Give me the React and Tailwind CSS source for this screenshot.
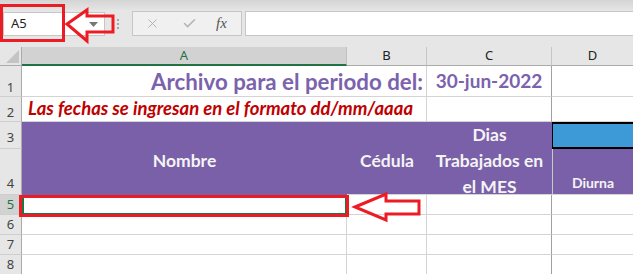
import { X, Check } from 'lucide-react';

export default function App() {
  return (
    <div className="relative w-[633px] h-[274px] overflow-hidden bg-white font-['Lato',sans-serif]">
      {/* toolbar */}
      <div className="flex items-start h-[47px] pt-[11px] bg-[linear-gradient(to_bottom,#d4d4d4,#e6e6e6_11px)]">
        <div className="ml-[3px] mt-[1px] w-[102px] h-[24px] bg-white border border-[#c6c6c6] flex items-center justify-between pl-[7px] pr-[6px]">
          <span className="text-[13px] text-[#222] font-['Noto_Sans',sans-serif]">A5</span>
          <svg width="9" height="5" viewBox="0 0 9 5"><polygon points="0,0 9,0 4.5,5" fill="#777" /></svg>
        </div>
        <div className="ml-[12px] mt-[8px] flex flex-col gap-[2px]">
          <div className="w-[2px] h-[2px] bg-[#a8a8a8]" />
          <div className="w-[2px] h-[2px] bg-[#a8a8a8]" />
          <div className="w-[2px] h-[2px] bg-[#a8a8a8]" />
        </div>
        <div className="ml-[13px] w-[110px] h-[25px] border border-[#c6c6c6] bg-[#f0f0f0] flex items-center">
          <X className="ml-[12px]" size={15} color="#b4b4b4" strokeWidth={1.6} />
          <Check className="ml-[22px]" size={15} color="#b4b4b4" strokeWidth={2.4} />
          <span className="ml-[19px] text-[15px] italic text-[#555] font-['Liberation_Serif',serif] leading-none">fx</span>
        </div>
        <div className="ml-[3px] flex-1 h-[25px] bg-white border-y border-l border-[#c6c6c6]" />
      </div>

      {/* sheet */}
      <div className="grid grid-cols-[22px_325px_80px_125px_81px] grid-rows-[19px_31px_25px_27px_46px_20px_20px_20px_20px]">
        {/* column headers */}
        <div className="relative bg-[#e6e6e6] border-r border-b border-[#ababab]">
          <svg className="absolute right-[2px] bottom-[2px]" width="13" height="13" viewBox="0 0 13 13"><polygon points="13,0 13,13 0,13" fill="#c4c4c4" /></svg>
        </div>
        <div className="bg-[#d2d2d2] border-r border-[#c0c0c0] border-b-2 border-b-[#217346] flex items-center justify-center text-[13px] text-[#217346] font-['Noto_Sans',sans-serif]">A</div>
        <div className="bg-[#e6e6e6] border-r border-b border-[#ababab] border-r-[#c6c6c6] flex items-center justify-center text-[13px] text-[#222] font-['Noto_Sans',sans-serif]">B</div>
        <div className="bg-[#e6e6e6] border-r border-b border-[#ababab] border-r-[#c6c6c6] flex items-center justify-center text-[13px] text-[#222] font-['Noto_Sans',sans-serif]">C</div>
        <div className="bg-[#e6e6e6] border-b border-[#ababab] flex items-center justify-center text-[13px] text-[#222] font-['Noto_Sans',sans-serif]">D</div>

        {/* row 1 */}
        <div className="bg-[#e6e6e6] border-r border-b border-[#ababab] border-b-[#cfcfcf] flex items-end justify-center pb-[2px] text-[13px] text-[#444] leading-none font-['Noto_Sans',sans-serif]">1</div>
        <div className="col-span-2 border-r border-b border-[#d4d4d4] flex items-center justify-end pr-[3px] pt-[1px] text-[22.3px] font-bold text-[#7b62ad] whitespace-nowrap">Archivo para el periodo del:</div>
        <div className="border-r border-b border-[#d4d4d4] border-r-[#a0a0a0] flex items-center justify-center pt-[1px] text-[19px] font-bold text-[#7b62ad] whitespace-nowrap">30-jun-2022</div>
        <div className="border-b border-[#d4d4d4]" />

        {/* row 2 */}
        <div className="bg-[#e6e6e6] border-r border-b border-[#ababab] border-b-[#cfcfcf] flex items-end justify-center pb-[2px] text-[13px] text-[#444] leading-none font-['Noto_Sans',sans-serif]">2</div>
        <div className="col-span-2 border-r border-b border-[#d4d4d4] flex items-center pl-[6px] text-[18.5px] font-bold italic text-[#c00000] whitespace-nowrap">Las fechas se ingresan en el formato dd/mm/aaaa</div>
        <div className="border-r border-b border-[#d4d4d4] border-r-[#a0a0a0]" />
        <div className="border-b border-[#d4d4d4]" />

        {/* row 3 */}
        <div className="bg-[#e6e6e6] border-r border-b border-[#ababab] border-b-[#cfcfcf] flex items-end justify-center pb-[4px] text-[13px] text-[#444] leading-none font-['Noto_Sans',sans-serif]">3</div>
        <div className="row-span-2 bg-[#7a60a9] flex items-center justify-center pt-[6px] text-[17.5px] font-bold text-[#f4f4f4]">Nombre</div>
        <div className="row-span-2 bg-[#7a60a9] border-b border-[#d4d4d4] flex items-center justify-center pt-[6px] text-[17.5px] font-bold text-[#f4f4f4]">Cédula</div>
        <div className="row-span-2 bg-[#7a60a9] border-b border-[#d4d4d4] flex items-center justify-center pt-[6px] text-center text-[17.5px] leading-[26px] font-bold text-[#f4f4f4] whitespace-nowrap">Dias<br />Trabajados en<br />el MES</div>
        <div className="bg-[#3d9ad6] border-t-2 border-b-2 border-l border-black" />

        {/* row 4 */}
        <div className="bg-[#e6e6e6] border-r border-b border-[#ababab] border-b-[#cfcfcf] flex items-end justify-center pb-[4px] text-[13px] text-[#444] leading-none font-['Noto_Sans',sans-serif]">4</div>
        <div className="bg-[#7a60a9] border-l border-b border-l-[#c8c8c8] border-b-[#d4d4d4] flex items-end justify-center pb-[1px] text-[14px] font-bold text-[#f4f4f4]">Diurna</div>

        {/* rows 5-8 */}
        <div className="bg-[#d2d2d2] border-r border-b border-[#ababab] border-b-[#cfcfcf] flex items-end justify-center pb-[3px] text-[13px] text-[#217346] leading-none font-['Noto_Sans',sans-serif]">5</div>
        <div className="border-2 border-[#217346]" />
        <div className="border-r border-b border-[#d4d4d4]" />
        <div className="border-r border-b border-[#d4d4d4] border-r-[#a0a0a0]" />
        <div className="border-b border-[#d4d4d4]" />

        <div className="bg-[#e6e6e6] border-r border-b border-[#ababab] border-b-[#cfcfcf] flex items-end justify-center pb-[3px] text-[13px] text-[#444] leading-none font-['Noto_Sans',sans-serif]">6</div>
        <div className="border-r border-b border-[#d4d4d4]" />
        <div className="border-r border-b border-[#d4d4d4]" />
        <div className="border-r border-b border-[#d4d4d4] border-r-[#a0a0a0]" />
        <div className="border-b border-[#d4d4d4]" />

        <div className="bg-[#e6e6e6] border-r border-b border-[#ababab] border-b-[#cfcfcf] flex items-end justify-center pb-[3px] text-[13px] text-[#444] leading-none font-['Noto_Sans',sans-serif]">7</div>
        <div className="border-r border-b border-[#d4d4d4]" />
        <div className="border-r border-b border-[#d4d4d4]" />
        <div className="border-r border-b border-[#d4d4d4] border-r-[#a0a0a0]" />
        <div className="border-b border-[#d4d4d4]" />

        <div className="bg-[#e6e6e6] border-r border-b border-[#ababab] border-b-[#cfcfcf] flex items-end justify-center pb-[3px] text-[13px] text-[#444] leading-none font-['Noto_Sans',sans-serif]">8</div>
        <div className="border-r border-b border-[#d4d4d4]" />
        <div className="border-r border-b border-[#d4d4d4]" />
        <div className="border-r border-b border-[#d4d4d4] border-r-[#a0a0a0]" />
        <div className="border-b border-[#d4d4d4]" />
      </div>

      {/* annotations */}
      <div className="absolute left-0 top-[4px] w-[65px] h-[38px] border-[3px] border-[#ec1c24]" />
      <div className="absolute left-[19px] top-[195px] w-[330px] h-[22px] border-[3px] border-[#ec1c24]" />
      <svg className="absolute left-0 top-0 pointer-events-none" width="633" height="274" viewBox="0 0 633 274">
        <polygon points="67,24 87,10 87,16 113,16 113,32 87,32 87,41" fill="none" stroke="#ec1c24" strokeWidth="3" strokeLinejoin="miter" />
        <polygon points="355,207 386,194 386,201 419,201 419,214 386,214 386,220" fill="none" stroke="#ec1c24" strokeWidth="3" strokeLinejoin="miter" />
      </svg>
    </div>
  );
}
